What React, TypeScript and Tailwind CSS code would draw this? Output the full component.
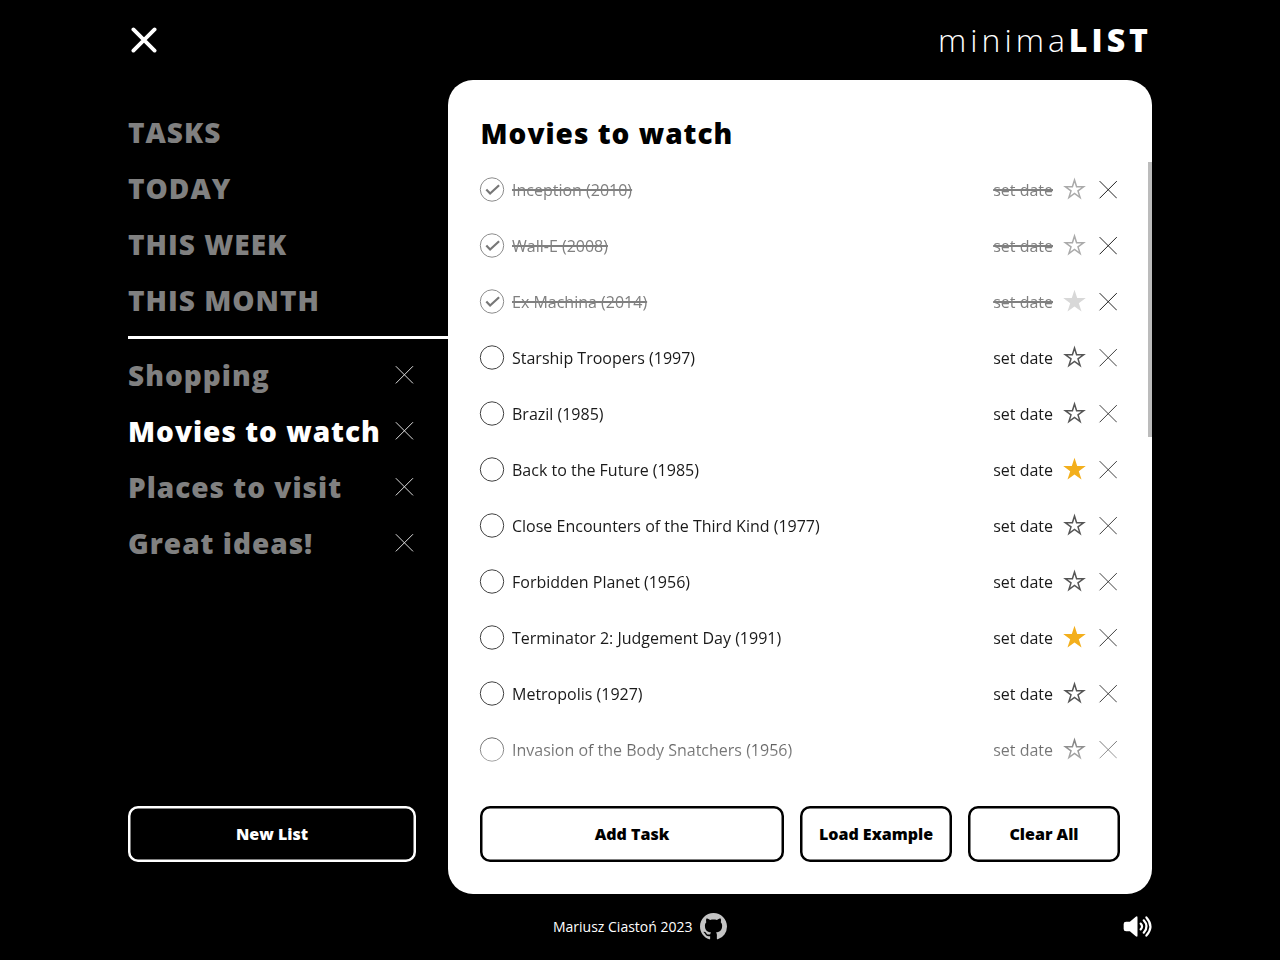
const views = ['TASKS', 'TODAY', 'THIS WEEK', 'THIS MONTH'];
const lists = ['Shopping', 'Movies to watch', 'Places to visit', 'Great ideas!'];

type Task = { title: string; done?: boolean; starred?: boolean };

const tasks: Task[] = [
  { title: 'Inception (2010)', done: true },
  { title: 'Wall-E (2008)', done: true },
  { title: 'Ex Machina (2014)', done: true, starred: true },
  { title: 'Starship Troopers (1997)' },
  { title: 'Brazil (1985)' },
  { title: 'Back to the Future (1985)', starred: true },
  { title: 'Close Encounters of the Third Kind (1977)' },
  { title: 'Forbidden Planet (1956)' },
  { title: 'Terminator 2: Judgement Day (1991)', starred: true },
  { title: 'Metropolis (1927)' },
  { title: 'Invasion of the Body Snatchers (1956)' },
];

function ThinCross({ className, viewBox }: { className: string; viewBox: string }) {
  return (
    <svg viewBox={viewBox} className={`block size-[18px] shrink-0 overflow-visible ${className}`} fill="none" stroke="currentColor" strokeWidth="1">
      <path d="M.4.4 17.6 17.6M17.6.4.4 17.6" />
    </svg>
  );
}

function Star({ done, starred }: Task) {
  if (starred) {
    return (
      <svg viewBox="-.5 0 22 22" className={`mb-[2px] block size-[22px] shrink-0 overflow-visible ${done ? 'text-[#d8d8d8]' : 'text-[#f3af1c]'}`} fill="currentColor">
        <path d="M11-.3l2.700 8.400h8.600l-7 5.100 2.700 8.400L11 16.500l-7 5.100 2.700-8.400-7-5.100h8.600z" />
      </svg>
    );
  }
  return (
    <svg viewBox="-.5 0 22 22" className={`mb-[2px] block size-[22px] shrink-0 overflow-visible ${done ? 'text-[#aaaaaa]' : 'text-[#555555]'}`} fill="none" stroke="currentColor" strokeWidth="1.5">
      <path d="M11 2.100l2.100 6.650h7l-5.600 4.100 2.100 6.700L11 15.450l-5.600 4.100 2.100-6.700-5.600-4.100h7z" />
    </svg>
  );
}

function Check({ done }: { done?: boolean }) {
  return (
    <svg viewBox="0 .5 26 26" className="block size-[26px] shrink-0 overflow-visible" fill="none">
      <circle cx="13" cy="13" r="11.7" stroke={done ? '#8c8c8c' : '#404040'} strokeWidth="1" />
      {done && <path d="M7.300 13.100l3.800 3.900 9-8.200" stroke="#777777" strokeWidth="2.200" />}
    </svg>
  );
}

function TaskRow(task: Task) {
  const text = task.done ? 'text-[#808080] line-through decoration-2' : 'text-[#1a1a1a]';
  return (
    <li className="flex h-14 shrink-0 items-center">
      <Check done={task.done} />
      <span className={`ml-[7px] flex-1 text-base ${text}`}>{task.title}</span>
      <span className={`mr-2.5 text-base ${text}`}>set date</span>
      <Star {...task} />
      <ThinCross viewBox="-.2 .3 18 18" className={`ml-3.5 ${task.done ? 'text-[#222222]' : 'text-[#404040]'}`} />
    </li>
  );
}

function Speaker() {
  return (
    <svg viewBox="0 0 30 22" className="block h-[21px] w-[29px] overflow-visible" fill="none">
      <path d="M3 6h4l6.200-5.200q1.800-1.200 1.800.8v18.800q0 2-1.800.8L7 16H3Q.5 16 .5 13.500v-5Q.5 6 3 6z" fill="#fff" />
      <path d="M18.300 8q3 3 0 6M21.500 4.500q6 6.500 0 13M24.300 1.500q8.400 9.500 0 19" stroke="#fff" strokeWidth="2.300" strokeLinecap="round" />
    </svg>
  );
}

const action = 'h-[55.5px] rounded-[10px] text-base font-extrabold';
const dark = 'text-black shadow-[inset_0_0_0_2.5px_#000]';

export default function App() {
  return (
    <div className="h-[960px] w-[1280px] overflow-hidden bg-black px-32 font-['Open_Sans',sans-serif]">
      <header className="flex h-20 items-center justify-between pl-[3px]">
        <svg viewBox="0 0 26 26" className="block size-[26px]" fill="none" stroke="#fff" strokeWidth="3.8" strokeLinecap="round">
          <path d="M2.400 2.400l21.200 21.200M23.600 2.400L2.400 23.600" />
        </svg>
        <h1 className="flex text-[32px] leading-none tracking-[4px] text-white">
          <span className="font-light">minima</span>
          <span className="font-extrabold">LIST</span>
        </h1>
      </header>

      <main className="flex h-[813.5px]">
        <aside className="flex w-80 flex-col pt-6">
          <ul className="text-[28px] font-extrabold tracking-[1px] text-[#808080]">
            {views.map((v) => (
              <li key={v} className="flex h-14 items-center">{v}</li>
            ))}
          </ul>
          <div className="mt-2 h-[2.7px] w-full bg-white" />
          <ul className="mt-[8.3px] text-[28px] font-extrabold tracking-[1px] text-[#808080]">
            {lists.map((l) => (
              <li key={l} className="flex h-14 items-center justify-between pr-[35px]">
                <span className={l === 'Movies to watch' ? 'whitespace-nowrap text-white' : ''}>{l}</span>
                <ThinCross viewBox="-.4 .2 18 18" className="text-[#dddddd]" />
              </li>
            ))}
          </ul>
          <button className="mr-8 mt-auto mb-8 h-[55.5px] rounded-[10px] text-base font-extrabold text-white shadow-[inset_0_0_0_2.5px_#fff]">New List</button>
        </aside>

        <section className="flex w-[704px] flex-col overflow-hidden rounded-[25px] bg-white pb-8">
          <h2 className="flex h-[82px] shrink-0 items-end pb-2 pl-[32.5px] text-[28px] font-extrabold tracking-[1px] text-black">Movies to watch</h2>
          <div className="flex h-[620px] items-start justify-between">
            <ul className="ml-[31px] w-[638px] [mask-image:linear-gradient(to_bottom,#000_558px,transparent_636px)]">
              {tasks.map((t) => (
                <TaskRow key={t.title} {...t} />
              ))}
            </ul>
            <div className="h-[275px] w-1 bg-[#bcbcbc]" />
          </div>
          <div className="mx-8 mt-auto flex gap-4">
            <button className={`${action} ${dark} w-[304px]`}>Add Task</button>
            <button className={`${action} ${dark} w-38`}>Load Example</button>
            <button className={`${action} ${dark} w-38`}>Clear All</button>
          </div>
        </section>
      </main>

      <footer className="grid h-[66.5px] grid-cols-[1fr_auto_1fr] items-center">
        <span />
        <div className="flex items-center gap-[7.5px] text-sm text-white">
          <span>Mariusz Ciastoń 2023</span>
          <svg viewBox="0 0 16 16" className="block size-[27px]" fill="#c4c4c4">
            <path d="M8 0C3.580 0 0 3.580 0 8c0 3.540 2.290 6.530 5.470 7.590.4.070.55-.17.55-.38 0-.19-.01-.82-.01-1.490-2.010.37-2.530-.49-2.690-.94-.09-.23-.48-.94-.82-1.130-.28-.15-.68-.52-.01-.53.63-.01 1.080.58 1.230.82.72 1.210 1.870.87 2.330.66.07-.52.28-.87.51-1.070-1.780-.2-3.640-.89-3.640-3.950 0-.87.31-1.590.82-2.150-.08-.2-.36-1.020.08-2.120 0 0 .67-.21 2.200.82.64-.18 1.320-.27 2-.27s1.360.09 2 .27c1.530-1.040 2.200-.82 2.200-.82.44 1.100.16 1.920.08 2.120.51.56.82 1.270.82 2.150 0 3.070-1.870 3.750-3.650 3.950.29.25.54.73.54 1.480 0 1.070-.01 1.930-.01 2.200 0 .21.15.46.55.38A8.010 8.010 0 0 0 16 8c0-4.420-3.580-8-8-8z" />
          </svg>
        </div>
        <div className="flex justify-end"><Speaker /></div>
      </footer>
    </div>
  );
}
